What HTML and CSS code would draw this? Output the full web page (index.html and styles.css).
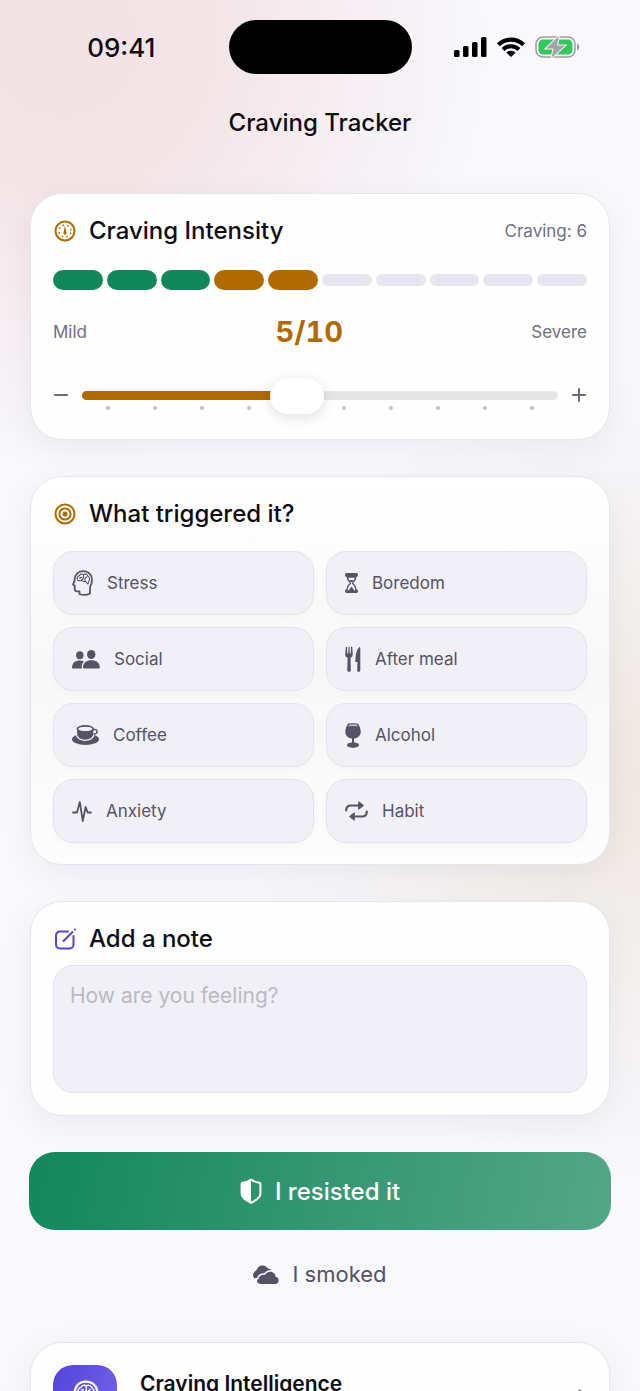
FILE: index.html
```html
<!DOCTYPE html>
<html lang="en">
<head>
    <meta charset="UTF-8">
    <meta name="viewport" content="width=device-width, initial-scale=1.0">
    <title>Craving Tracker</title>
    <link rel="stylesheet" href="styles.css">
</head>
<body>
    <div class="status-bar">
        <span class="time">09:41</span>
        <div class="island"></div>
        <div class="status-icons">
            <svg width="33" height="20" viewBox="0 0 33 20">
                <rect x="0" y="13" width="5.500" height="7" rx="1.500"/>
                <rect x="9" y="9" width="5.500" height="11" rx="1.500"/>
                <rect x="18" y="5" width="5.500" height="15" rx="1.500"/>
                <rect x="27" y="0" width="5.500" height="20" rx="1.500"/>
            </svg>
            <svg width="28" height="20" viewBox="0 0 28 20">
                <path d="M0 6.300a20 20 0 0 1 28 0l-2.800 2.900a16 16 0 0 0-22.400 0z"/>
                <path d="M4.600 11a13.400 13.400 0 0 1 18.800 0l-2.900 2.900a9.300 9.300 0 0 0-13 0z"/>
                <path d="M9.300 15.600a6.800 6.800 0 0 1 9.400 0L14 20z"/>
            </svg>
            <svg width="45" height="24" viewBox="0 0 45 24">
                <rect x="1" y="2" width="39" height="20" rx="7" fill="none" stroke="#9c9ca1" stroke-width="1.500"/>
                <path d="M42 8.500c3 1 3 6 0 7z" fill="#9c9ca1"/>
                <rect x="3.500" y="4.500" width="34" height="15" rx="4.500" fill="#34c759"/>
                <path d="M24 1L11 13.500h7.500L16.500 23 30 10.500h-8z" fill="#a3a3a6" stroke="#f5f3f8" stroke-width="2" paint-order="stroke"/>
            </svg>
        </div>
    </div>

    <h1>Craving Tracker</h1>

    <main>
        <section class="card intensity">
            <div class="card-head">
                <svg class="amber" width="24" height="24" viewBox="0 0 24 24" fill="none" stroke="currentColor">
                    <circle cx="12" cy="12" r="9.500" stroke-width="2"/>
                    <circle cx="12" cy="12" r="6" stroke-width="1.800" stroke-linecap="round" stroke-dasharray="0 4.712" transform="rotate(22.500 12 12)"/>
                    <path d="M12 6.500l1.500 7a1.600 1.600 0 1 1-3 0z" fill="currentColor" stroke="none"/>
                </svg>
                <h2>Craving Intensity</h2>
                <span class="muted count">Craving: 6</span>
            </div>
            <div class="bars">
                <i class="green"></i><i class="green"></i><i class="green"></i><i class="orange"></i><i class="orange"></i>
                <i></i><i></i><i></i><i></i><i></i>
            </div>
            <div class="scale">
                <span class="muted">Mild</span>
                <strong>5/10</strong>
                <span class="muted">Severe</span>
            </div>
            <div class="slider-row">
                <button class="step" aria-label="Decrease">
                    <svg width="16" height="16" viewBox="0 0 16 16"><path d="M2 8h12"/></svg>
                </button>
                <div class="slider">
                    <div class="ticks"><i></i><i></i><i></i><i></i><i></i><i></i><i></i><i></i><i></i><i></i></div>
                    <input type="range" min="1" max="10" value="5" aria-label="Craving intensity">
                </div>
                <button class="step" aria-label="Increase">
                    <svg width="16" height="16" viewBox="0 0 16 16"><path d="M2 8h12M8 2v12"/></svg>
                </button>
            </div>
        </section>

        <section class="card triggers">
            <div class="card-head">
                <svg class="amber" width="24" height="24" viewBox="0 0 24 24" fill="none" stroke="currentColor" stroke-width="2">
                    <circle cx="12" cy="12" r="9.500"/>
                    <circle cx="12" cy="12" r="5.600"/>
                    <circle cx="12" cy="12" r="2.500" fill="currentColor" stroke="none"/>
                </svg>
                <h2>What triggered it?</h2>
            </div>
            <div class="chips">
                <button class="chip">
                    <svg width="21" height="26" viewBox="0 0 21 26" fill="none" stroke="currentColor" stroke-width="1.800" stroke-linejoin="round" stroke-linecap="round">
                        <path d="M7.500 24v-2.700H5c-1.600 0-2.300-.8-2.300-2.200v-3.500L1 14.500l1.500-3.700C2.300 5 6 1.200 11 1.200c5.500 0 9 3.700 9 8.600 0 3-.5 5-2 7v6.700c-3 1.600-7 1.800-10.500.5z"/>
                        <path stroke-width="1.100" d="M5.500 10c-1-2 .2-4 1.800-4.200.7-1.700 2.700-2.300 4-1.300 2-1 4.300 0 4.700 1.800 1.800 1.200 2 3.400.9 4.900-.2 1.300-.5 2-1 2.800l-2.400-2.700c-2 .6-3.300 0-3.500-1.300-1.300.9-3.300.8-4.500 0zM7.500 8l2.200-.8M11.500 5v2.800l-1.300 1.800M14.800 7l-1.800 1.300v2.500"/>
                    </svg>
                    Stress
                </button>
                <button class="chip">
                    <svg width="13" height="20" viewBox="0 0 13 20">
                        <path fill="currentColor" d="M1.300 0h10.400c1.700 0 1.700 3.800 0 3.800h-.3c-.1 3.200-1.600 4.700-3.300 6.200 1.700 1.500 3.200 3 3.300 6.200h.3c1.700 0 1.700 3.800 0 3.800H1.300c-1.700 0-1.700-3.800 0-3.800h.3c.1-3.200 1.600-4.700 3.300-6.200C3.200 8.500 1.700 7 1.600 3.800h-.3c-1.700 0-1.700-3.800 0-3.800z"/>
                        <path fill="#f1f0f7" d="M3.400 4.800h6.200c-.1 2.200-1.400 3.300-2.500 4.300v2c1.300 1 3.200 3 3.200 6.400H2.700c0-3.400 1.900-5.400 3.200-6.400v-2C4.800 8.100 3.500 7 3.400 4.800z"/>
                        <path fill="currentColor" d="M4.500 7h4L6.500 9.500zM3.300 18l3.200-4.500L9.700 18z"/>
                    </svg>
                    Boredom
                </button>
                <button class="chip">
                    <svg width="28" height="19" viewBox="0 0 28 19" fill="currentColor">
                        <ellipse cx="7.800" cy="5.300" rx="3.700" ry="4"/>
                        <ellipse cx="19.200" cy="4.500" rx="4.200" ry="4.500"/>
                        <path d="M0 18c0-5 3.300-7.400 7.700-7.400 1.700 0 3.100.3 4.200 1C10 13.500 9.300 16 10 18.500H1c-.7 0-1-.2-1-.5z"/>
                        <path d="M11 17.200c0-4.500 3.600-7 8.300-7s8.500 2.500 8.500 7c0 .9-.5 1.300-1.300 1.300H12.400c-.9 0-1.400-.4-1.400-1.300z"/>
                    </svg>
                    Social
                </button>
                <button class="chip">
                    <svg width="16" height="25" viewBox="0 0 16 25" fill="currentColor">
                        <path d="M.8 0h1.200l.3 6.500h.9L3.500 0h1l.3 6.500h.9L6 0h1.200l.5 7.500c0 2-1 2.700-2.200 3.200l.3 12.800c0 1.800-3.500 1.800-3.500 0l.3-12.800C1.200 10.200.2 9.500.2 7.500z"/>
                        <path d="M15.300 1v22.500c0 1.800-3.100 1.800-3.100 0l.2-8.500h-1.200c-.7 0-.9-.4-.9-1C10.500 7.500 11.500 3 14 .4c.7-.6 1.300-.2 1.300.6z"/>
                    </svg>
                    After meal
                </button>
                <button class="chip">
                    <svg width="27" height="20" viewBox="0 0 27 20">
                        <ellipse cx="13.500" cy="14.300" rx="13.500" ry="5.700" fill="currentColor"/>
                        <path d="M4.500 3v6c0 8.500 17.500 8.500 17.500 0V3z" fill="currentColor" stroke="#f1f0f7" stroke-width="1.300"/>
                        <path d="M21.500 4.800c4.800-1.300 4.800 4 .2 4.500" fill="none" stroke="currentColor" stroke-width="1.500"/>
                        <ellipse cx="13.300" cy="3.800" rx="8.800" ry="3.700" fill="currentColor"/>
                        <ellipse cx="13.300" cy="3.900" rx="7" ry="2.200" fill="#f1f0f7"/>
                    </svg>
                    Coffee
                </button>
                <button class="chip">
                    <svg width="16" height="25" viewBox="0 0 16 25" fill="currentColor">
                        <path d="M3 .8C5 0 11 0 13 .8c1.500 2 2.700 5 2.700 8 0 4-3 6.500-6.700 6.800v4c3 .2 5 1 5 2.400 0 3.600-12 3.600-12 0 0-1.400 2-2.200 5-2.400v-4C3.300 15.300.3 12.800.3 8.800c0-3 1.200-6 2.700-8z"/>
                        <path fill="#c9c8d2" d="M4 2c2-.6 6-.6 8 0l.6 1.400c-3-.6-6.200-.6-9.200 0z"/>
                    </svg>
                    Alcohol
                </button>
                <button class="chip">
                    <svg width="20" height="21" viewBox="0 0 20 21" fill="none" stroke="currentColor" stroke-width="1.800" stroke-linejoin="round" stroke-linecap="round">
                        <path d="M1 11.500h4L7.800 1l3 19 2.800-14 2 5.500H19"/>
                    </svg>
                    Anxiety
                </button>
                <button class="chip">
                    <svg width="23" height="20" viewBox="0 0 23 20" fill="none" stroke="currentColor" stroke-width="2.200" stroke-linecap="round">
                        <path d="M1.200 9.500c0-3.600 1.500-5 4.800-5h8M21.800 10.500c0 3.600-1.500 5-4.800 5H9"/>
                        <path d="M14 1l4.500 3.500L14 8zM9 12l-4.500 3.500L9 19z" fill="currentColor" stroke-width="1" stroke-linejoin="round"/>
                    </svg>
                    Habit
                </button>
            </div>
        </section>

        <section class="card note">
            <div class="card-head">
                <svg class="violet" width="24" height="24" viewBox="0 0 24 24" fill="none" stroke="currentColor" stroke-width="2" stroke-linecap="round">
                    <path d="M15 4.500H7a4 4 0 0 0-4 4v9a4 4 0 0 0 4 4h9.500a4 4 0 0 0 4-4V9"/>
                    <path d="M10.500 14L19.500 5M21.900 2.600l.1-.1"/>
                </svg>
                <h2><label for="note">Add a note</label></h2>
            </div>
            <textarea id="note" placeholder="How are you feeling?"></textarea>
        </section>

        <button class="resisted">
            <svg width="22" height="26" viewBox="0 0 22 26">
                <path d="M11 1.500c2.700 2 5.300 2.900 8.500 3.300.5.100.9.500.9 1v9.700c0 4-4.400 7-9.400 9.300-5-2.300-9.400-5.300-9.400-9.300V5.800c0-.5.400-.9.900-1C5.700 4.400 8.300 3.500 11 1.500z" fill="none" stroke="#fff" stroke-width="2" stroke-linejoin="round"/>
                <path d="M11 1.500v23.300c-5-2.300-9.400-5.300-9.400-9.300V5.100C5.300 4.600 8 3.700 11 1.500z" fill="#fff"/>
            </svg>
            I resisted it
        </button>

        <button class="smoked">
            <svg width="26" height="19" viewBox="0 0 26 19" fill="currentColor">
                <path d="M1.400 13.600C-.8 11-.2 7 3.300 5.600 4.200 2 7 .2 10 .4c2.300.1 4 1.300 5 3.200 1.600.1 2.700.6 3.500 1.500-3-.3-5.800 1-7.200 3.200-3.500-.3-6.300 1.500-7 4.400-1.200.1-2 .4-2.900.9z"/>
                <path d="M5.500 14c.3-2.900 3-4.700 6.500-4.200 1.500-2.300 3.900-3.500 6.300-3 2.500.5 4.200 2.500 4.300 5 2 .4 3 1.800 3 3.600 0 2-1.500 3.500-3.600 3.500H8.500c-2.800 0-4.500-1.300-4.500-3 0-1.100.6-1.700 1.500-1.900z"/>
            </svg>
            I smoked
        </button>

        <a class="card intelligence" href="#">
            <span class="badge">
                <svg width="28" height="34" viewBox="0 0 21 26" fill="none" stroke="#fff" stroke-width="1.800" stroke-linejoin="round">
                    <path d="M7.500 24v-2.700H5c-1.600 0-2.300-.8-2.300-2.200v-3.500L1 14.500l1.500-3.700C2.300 5 6 1.200 11 1.200c5.500 0 9 3.700 9 8.600 0 3-.5 5-2 7v6.700c-3 1.600-7 1.800-10.500.5z"/>
                    <path stroke-width="1.100" d="M5.500 10c-1-2 .2-4 1.800-4.200.7-1.700 2.700-2.300 4-1.300 2-1 4.300 0 4.700 1.800 1.800 1.200 2 3.400.9 4.900-.2 1.300-.5 2-1 2.800l-2.400-2.700c-2 .6-3.300 0-3.500-1.300-1.300.9-3.300.8-4.500 0zM7.500 8l2.200-.8M11.500 5v2.800l-1.300 1.800M14.800 7l-1.800 1.300v2.500"/>
                </svg>
            </span>
            <span class="intelligence-title">Craving Intelligence</span>
            <svg class="chevron" width="9" height="16" viewBox="0 0 9 16" fill="none" stroke="currentColor" stroke-width="2.200" stroke-linecap="round" stroke-linejoin="round">
                <path d="M1.500 1.500L7.500 8l-6 6.500"/>
            </svg>
        </a>
    </main>
</body>
</html>
```

FILE: styles.css
```css
* {
    box-sizing: border-box;
}
body {
    margin: 0;
    height: 100vh;
    overflow: hidden;
    font-family: Inter, "Liberation Sans", sans-serif;
    color: #0c0c14;
    background:
        radial-gradient(circle at 10% 3%, #f4e2e5 0, #f4e4e7 140px, rgba(244, 228, 231, 0) 420px),
        radial-gradient(circle at 100% 56%, #efe8e2 0, rgba(239, 232, 226, 0) 400px),
        #f8f8fd;
}
button {
    font: inherit;
    border: none;
    background: none;
    padding: 0;
}
h1, h2 {
    margin: 0;
    font-size: 24px;
    line-height: 30px;
    font-weight: 500;
}
h1 {
    text-align: center;
    margin-top: 34px;
}
.status-bar {
    display: grid;
    grid-template-columns: 1fr 183px 1fr;
    align-items: center;
    padding-top: 20px;
}
.time {
    justify-self: center;
    padding-left: 14px;
    font-size: 26px;
    font-weight: 500;
}
.island {
    height: 54px;
    border-radius: 27px;
    background: #000;
}
.status-icons {
    display: flex;
    align-items: center;
    justify-content: center;
    gap: 10px;
    padding-right: 18px;
}
main {
    display: flex;
    flex-direction: column;
    padding: 55px 30px 0;
}
.card {
    flex: none;
    margin-bottom: 36px;
    padding: 22px;
    border: 1px solid #e6e5ee;
    border-radius: 32px;
    background: #fefefe;
    box-shadow: 0 8px 32px rgba(20, 20, 30, 0.06);
}
.card-head {
    display: flex;
    align-items: center;
    gap: 12px;
}
.amber {
    color: #b06a00;
}
.violet {
    color: #5443d2;
}
.muted {
    color: #716f80;
    font-size: 17px;
}
.count {
    margin-left: auto;
}

/* intensity */
.intensity {
    padding-bottom: 26px;
}
.bars {
    display: flex;
    align-items: center;
    gap: 4px;
    height: 20px;
    margin: 24px 0;
}
.bars i {
    flex: 1;
    height: 12px;
    border-radius: 10px;
    background: #e7e6ef;
}
.bars .green,
.bars .orange {
    height: 20px;
    background: #13875c;
}
.bars .orange {
    background: #b06a00;
}
.scale {
    display: flex;
    align-items: center;
    justify-content: space-between;
    line-height: 36px;
}
.scale strong {
    font-size: 29px;
    color: #b06a00;
    font-variant-numeric: tabular-nums;
}
.slider-row {
    display: flex;
    align-items: center;
    justify-content: space-between;
    gap: 13px;
    margin-top: 27px;
}
.step {
    display: flex;
    color: #6b697a;
}
.step svg {
    stroke: currentColor;
    stroke-width: 2;
    stroke-linecap: round;
}
.slider {
    flex: 1;
    display: grid;
}
.slider > * {
    grid-area: 1 / 1;
}
.ticks {
    align-self: end;
    display: flex;
    justify-content: space-between;
    padding: 0 24px 3px;
}
.ticks i {
    width: 4px;
    height: 4px;
    border-radius: 50%;
    background: #c2c2c6;
}
input[type="range"] {
    -webkit-appearance: none;
    appearance: none;
    width: 100%;
    height: 36px;
    margin: 0;
    background: none;
}
input[type="range"]::-webkit-slider-runnable-track {
    height: 9px;
    border-radius: 5px;
    background: linear-gradient(to right, #b06a00 45%, #e6e6e7 45%);
}
input[type="range"]::-webkit-slider-thumb {
    -webkit-appearance: none;
    width: 54px;
    height: 36px;
    margin-top: -13px;
    border-radius: 18px;
    background: #fff;
    box-shadow: 0 3px 14px rgba(0, 0, 0, 0.13);
}

/* triggers */
.triggers {
    padding-bottom: 21px;
    background: linear-gradient(#fff, #f8f8f8 50%, #fdfdfd);
}
.chips {
    display: grid;
    grid-template-columns: 1fr 1fr;
    gap: 12px;
    margin-top: 22px;
}
.chip {
    display: flex;
    align-items: center;
    gap: 14px;
    height: 64px;
    padding: 0 18px;
    border: 1px solid #e4e3ed;
    border-radius: 20px;
    background: #f1f0f7;
    color: #555366;
    font-size: 17px;
    box-shadow: 0 4px 12px rgba(30, 30, 60, 0.02);
}

/* note */
textarea {
    display: block;
    width: 100%;
    height: 128px;
    margin-top: 11px;
    padding: 16px;
    border: 1px solid #e4e3ed;
    border-radius: 20px;
    background: #f1f0f7;
    font: 21px/28px Inter, "Liberation Sans", sans-serif;
    resize: none;
}
textarea::placeholder {
    color: #bbbac2;
}

/* actions */
.resisted,
.smoked {
    display: flex;
    align-items: center;
    justify-content: center;
    gap: 13px;
}
.resisted {
    flex: none;
    height: 78px;
    margin: 0 -1px;
    border-radius: 26px;
    background: linear-gradient(100deg, #13875c, #54a688);
    color: #fff;
    font-size: 24px;
    font-weight: 500;
}
.smoked {
    margin: 30px 0 54px;
    line-height: 28px;
    font-size: 22px;
    color: #555366;
}

.intelligence {
    display: flex;
    align-items: flex-start;
    color: inherit;
    text-decoration: none;
}
.badge {
    display: flex;
    align-items: center;
    justify-content: center;
    width: 64px;
    height: 64px;
    margin-right: 23px;
    border-radius: 20px;
    background: linear-gradient(120deg, #5443d8, #7767ea);
}
.intelligence-title {
    flex: 1;
    margin-top: 5px;
    font-size: 21px;
    line-height: 28px;
    font-weight: 600;
}
.chevron {
    margin-top: 24px;
    color: #716f80;
}
```
